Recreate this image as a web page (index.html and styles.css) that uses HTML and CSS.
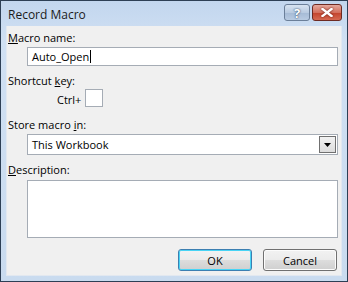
FILE: index.html
```html
<!DOCTYPE html>
<html lang="en">
<head>
  <meta charset="UTF-8" />
  <title>Record Macro</title>
  <link rel="stylesheet" href="styles.css">
</head>
<body>
  <div class="window">
    <div class="titlebar">
      <span class="title">Record Macro</span>
      <div class="caption-buttons">
        <div class="cap-btn help">?</div>
        <div class="cap-btn close">
          <svg width="12" height="9" viewBox="0 0 12 9">
            <path d="M1.5 1 L10.5 8 M10.5 1 L1.5 8" stroke="#fff" stroke-width="2.4" stroke-linecap="square"/>
          </svg>
        </div>
      </div>
    </div>

    <div class="client">
      <div class="label first"><u>M</u>acro name:</div>
      <div class="field name">Auto_Open<span class="caret"></span></div>

      <div class="label">Shortcut <u>k</u>ey:</div>
      <div class="ctrl-row">
        <span class="ctrl">Ctrl+</span>
        <div class="keybox"></div>
      </div>

      <div class="label store">Store macro <u>i</u>n:</div>
      <div class="field select">
        <span>This Workbook</span>
        <div class="drop">
          <svg width="7" height="4" viewBox="0 0 7 4"><path d="M0 0 H7 L3.5 4 Z" fill="#000"/></svg>
        </div>
      </div>

      <div class="label"><u>D</u>escription:</div>
      <div class="field desc"></div>

      <div class="buttons">
        <button class="btn default">OK</button>
        <button class="btn">Cancel</button>
      </div>
    </div>
  </div>
</body>
</html>
```

FILE: styles.css
```css
body {
  margin: 0;
  font-family: 'Open Sans', 'Segoe UI', sans-serif;
  font-size: 11px;
  color: #000;
}
.window {
  width: 348px;
  height: 282px;
  box-sizing: border-box;
  border: 1px solid #2d3f55;
  background: linear-gradient(#c2d6ee, #d0e0f3 40px, #c9dbef);
  padding: 0 5px 5px 5px;
  display: flex;
  flex-direction: column;
}
.titlebar {
  height: 25px;
  display: flex;
  align-items: flex-start;
  justify-content: space-between;
}
.title {
  margin-top: 5px;
  margin-left: 2px;
  font-size: 12px;
  color: #1b1b1b;
}
.caption-buttons {
  display: flex;
  gap: 2px;
  margin-top: 3px;
}
.cap-btn {
  height: 17px;
  box-sizing: border-box;
  border: 1px solid #6b7f99;
  border-radius: 3px;
  display: flex;
  align-items: center;
  justify-content: center;
}
.help {
  width: 26px;
  background: linear-gradient(#d7e3f1, #b9cbe1 50%, #a5bad5 51%, #b8cbe2);
  color: #fff;
  font-weight: bold;
  font-size: 13px;
  text-shadow: 0 0 2px #3c5678, 0 0 1px #3c5678;
}
.close {
  width: 30px;
  border-color: #6d2a22;
  background: linear-gradient(#e5a99d, #d4705e 50%, #c2432c 51%, #d66a52);
}
.close svg {
  filter: drop-shadow(0 0 1px #6d1a10);
}
.client {
  flex: 1;
  background: #f0f0f0;
  border: 1px solid #e2e8f0;
  border-top: 0;
  padding: 0 2px 0 1px;
}
.label {
  height: 16px;
  line-height: 16px;
  margin-top: 7px;
}
.label.first {
  margin-top: 4px;
}
.label.store {
  margin-top: 10px;
}
.field {
  margin-left: 19px;
  margin-right: 1px;
  box-sizing: border-box;
  background: #fff;
  border: 1px solid #a5acb5;
}
.name {
  height: 19px;
  margin-top: 1px;
  padding-left: 4px;
  display: flex;
  align-items: center;
}
.caret {
  display: inline-block;
  width: 1px;
  height: 13px;
  background: #000;
  margin-left: 1px;
}
.ctrl-row {
  display: flex;
  align-items: center;
  height: 18px;
  padding-left: 49px;
}
.ctrl {
  margin-top: 3px;
  width: 28px;
}
.keybox {
  width: 18px;
  height: 18px;
  box-sizing: border-box;
  background: #fff;
  border: 1px solid #a5acb5;
}
.select {
  height: 21px;
  margin-top: 1px;
  display: flex;
  align-items: center;
  justify-content: space-between;
  padding-left: 4px;
}
.drop {
  width: 17px;
  height: 17px;
  margin-right: 1px;
  box-sizing: border-box;
  border: 1px solid #707070;
  background: linear-gradient(#f2f2f2, #dcdcdc);
  display: flex;
  align-items: center;
  justify-content: center;
}
.desc {
  height: 58px;
  margin-top: 2px;
}
.buttons {
  display: flex;
  justify-content: flex-end;
  gap: 11px;
  margin-top: 11px;
  margin-right: 2px;
}
.btn {
  width: 74px;
  height: 22px;
  font-family: inherit;
  font-size: 11px;
  border: 1px solid #707070;
  border-radius: 3px;
  background: linear-gradient(#f2f2f2, #ebebeb 50%, #dddddd 51%, #cfcfcf);
  box-shadow: inset 0 0 0 1px #fcfcfc;
  padding: 0;
}
.btn.default {
  border-color: #3c7fb1;
  box-shadow: inset 0 0 0 1px #48d4f5;
}
```
